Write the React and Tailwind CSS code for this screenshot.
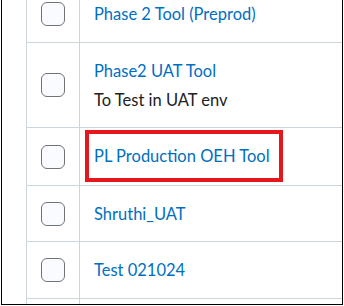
import React from 'react';

const rows = [
  { id: 1, name: 'Phase 2 Tool (Preprod)', h: 'h-[57px] -mt-[14px]' },
  { id: 2, name: 'Phase2 UAT Tool', desc: 'To Test in UAT env', h: 'h-[85px]' },
  { id: 3, name: 'PL Production OEH Tool', h: 'h-[58px]', marked: true },
  { id: 4, name: 'Shruthi_UAT', h: 'h-[56px]' },
  { id: 5, name: 'Test 021024', h: 'h-[57px]' },
  { id: 6, name: '', h: 'h-[57px]' },
];

const Checkbox = () => (
  <div className="w-6 h-6 rounded-[6px] border border-[#6e7477] bg-[#f9fbff]" />
);

const App = () => {
  return (
    <div className="w-[344px] h-[306px] bg-white overflow-hidden font-['Lato','Noto_Sans',sans-serif]">
      <div className="ml-px w-[342px] h-[305px] border-l border-r border-b border-black flex overflow-hidden">
        <div className="w-[25px] shrink-0 border-r border-[#cdd5dc]" />
        <div className="flex-1">
          {rows.map((row) => (
            <div key={row.id} className={`flex border-b border-[#cdd5dc] ${row.h}`}>
              <div className="w-[53px] shrink-0 border-r border-[#cdd5dc] flex items-center justify-center">
                <Checkbox />
              </div>
              <div className="flex-1 pl-[14px] flex flex-col justify-center">
                {row.marked ? (
                  <div className="mb-[2px]">
                    <span className="inline-block -ml-[9px] border-4 border-[#e5161c] pl-[5px] pr-[9px] py-[10px] text-[16.5px] leading-6 text-[#006fbf]">
                      {row.name}
                    </span>
                  </div>
                ) : (
                  <>
                    <div className="text-[16.5px] leading-6 text-[#006fbf]">{row.name}</div>
                    {row.desc && (
                      <div className="mt-[5px] text-[16.5px] leading-6 text-[#202122]">{row.desc}</div>
                    )}
                  </>
                )}
              </div>
            </div>
          ))}
        </div>
      </div>
    </div>
  );
};

export default App;
